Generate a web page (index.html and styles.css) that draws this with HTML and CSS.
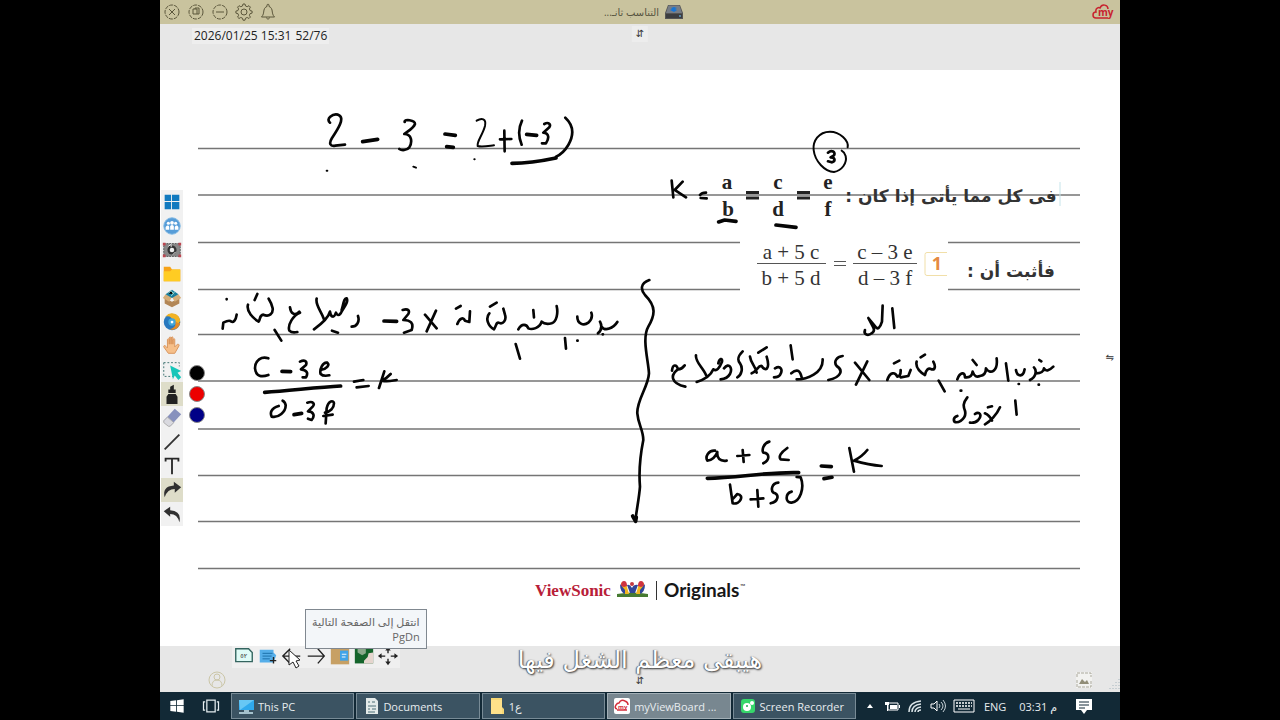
FILE: index.html
```html
<!DOCTYPE html>
<html lang="ar">
<head>
<meta charset="utf-8">
<title>myViewBoard</title>
<link rel="stylesheet" href="styles.css">
</head>
<body>
<div class="screen">
  <header class="titlebar">
    <div class="window-tools">
      <button aria-label="Close"><svg viewBox="0 0 24 24"><circle cx="12" cy="12" r="7" stroke-dasharray="4 1"/><path d="M9 9l6 6M15 9l-6 6"/></svg></button>
      <button aria-label="Restore"><svg viewBox="0 0 24 24"><circle cx="12" cy="12" r="7" stroke-dasharray="4 1"/><path d="M9 9h4v5H9zM11 9V8h4v6h-2"/></svg></button>
      <button aria-label="Minimize"><svg viewBox="0 0 24 24"><circle cx="12" cy="12" r="7" stroke-dasharray="4 1"/><path d="M8 12h8"/></svg></button>
      <button aria-label="Settings"><svg viewBox="0 0 24 24"><circle cx="12" cy="12" r="3"/><path d="M10.500 6l.5-2h2l.5 2 1.700.7 1.800-1 1.400 1.400-1 1.800.7 1.700 2 .5v2l-2 .5-.7 1.700 1 1.800-1.400 1.400-1.800-1-1.700.7-.5 2h-2l-.5-2-1.700-.7-1.800 1-1.400-1.400 1-1.800-.7-1.700-2-.5v-2l2-.5.7-1.700-1-1.800L7 5.700l1.800 1z"/></svg></button>
      <button aria-label="Notifications"><svg viewBox="0 0 24 24"><path d="M5.500 17c2-2 2-4 2.500-7 .5-2 1.500-3 3-3.500V5c0-1 2-1 2 0v1.500c1.500.5 2.500 1.500 3 3.500.5 3 .5 5 2.500 7zM10.500 17.500c0 2 3 2 3 0"/></svg></button>
    </div>
    <div class="file-name"><span dir="rtl">التناسب ثانـ...</span>
      <svg class="drive" viewBox="0 0 20 16"><path d="M4 1h12l3 8v6H1V9z" fill="#555"/><path d="M4.500 1.500h11L18 9H2z" fill="#777d86"/><path d="M7 4l3-1 3 1-2 1 2 1-3 2-4-2 2-1z" fill="#1674d4"/><path d="M2 10h16v4H2z" fill="#3c3d40"/><path d="M15 12h2" stroke="#7cf"/></svg>
    </div>
    <svg class="cloud" viewBox="0 0 22 16"><path d="M4 14C0 14 0 8 4 8c-1-4 3-5 4-4 2-5 8-3 8 1M4 14h12" fill="none" stroke="#c8222e" stroke-width="1.500"/><text x="6" y="12" class="cloud-text">my</text></svg>
  </header>
  <div class="strip strip-top">
    <span class="stamp"><time>2026/01/25 15:31</time> <span>52/76</span></span>
    <span class="updown" aria-hidden="true">⇵</span>
  </div>

  <main class="board">
    <svg class="page" viewBox="160 70 960 576">
      <g class="rules"><path d="M198 148.500H1080M198 195H1080M198 242.500H740M948 242.500H1080M198 289.500H740M948 289.500H1080M198 334.500H1080M198 381H1080M198 429H1080M198 475.500H1080M198 521.500H1080M198 568.500H1080"/></g>
      <g class="print bold">
        <text x="727" y="189">a</text><text x="728" y="216">b</text>
        <text x="778" y="189">c</text><text x="778" y="216">d</text>
        <text x="828" y="189">e</text><text x="828" y="216">f</text>
        <path d="M746 192.500h13M746 198h13M797 192.500h13M797 198h13" class="equals"/>
      </g>
      <g class="print">
        <text x="791" y="259">a + 5 c</text><text x="791" y="285">b + 5 d</text>
        <text x="885" y="259">c – 3 e</text><text x="885" y="285">d – 3 f</text>
        <path class="fraction" d="M757 263.500H826M853 263.500H917M834 261.500h12M834 265.500h12"/>
      </g>
      <path d="M947 252.500H927q-2 0-2 2v19q0 2 2 2h20" fill="none" stroke="#f1dfa8"/>
      <text class="number" x="937" y="270">1</text>
      <text class="arabic" x="951" y="202">فى كل مما يأتى إذا كان :</text>
      <text class="arabic" x="1011" y="277">فأثبت أن :</text>
      <path d="M1060 182v24" stroke="#c5e4ea"/>

      <g class="ink">
        <g transform="translate(310 100) scale(.3333)">
          <path d="M60 68C46 56 68 40 84 44C108 52 82 90 66 114C56 130 60 140 76 137L105 134M284 66C282 56 315 60 315 72C310 86 292 94 283 102C305 102 308 125 298 142C290 152 275 152 268 147M570 118L604 117M583 92L584 154M636 62C625 85 625 110 635 134M703 72C715 65 724 72 718 82L700 98C718 100 718 115 708 130L696 130M766 53C790 75 795 100 775 135C765 152 750 165 738 170"/>
          <path class="thin" d="M500 62C515 53 530 55 525 78C518 105 500 125 503 138C515 142 535 138 552 136"/>
          <path class="thick" d="M158 125L203 118M405 102L436 106M410 140L430 142M650 103L680 106M606 190C640 190 700 182 738 174"/>
          <path class="thin" d="M50 212h2M310 200l8 3M493 178h1"/>
        </g>
        <g transform="translate(650 120) scale(.3333)">
          <path class="thin" d="M593 82C597 62 570 35 540 35C505 35 488 65 491 90C495 125 525 155 552 156C575 152 592 130 587 108Q583 96 575 92"/>
          <path d="M534 98C545 88 558 96 552 106L542 112C558 113 556 125 545 127L534 124M65 182L70 232M98 185L74 210L108 232M150 225C155 218 162 218 168 218M152 234L170 235"/>
          <path class="thick" d="M206 306L224 300L258 304M378 315L438 322"/>
        </g>
        <g transform="translate(200 270) scale(.3333)">
          <path d="M80 87v1M68 176L70 158C85 150 90 150 94 155C100 158 108 150 110 134M172 72L164 90M144 104C138 125 160 145 176 155C182 145 178 136 190 134C208 142 220 130 218 115Q215 100 206 86M224 180L244 212M270 112C272 130 285 140 298 125M300 128C280 135 262 165 268 182Q276 190 292 186M350 86C345 105 365 125 372 148M342 178C360 165 385 145 390 125C393 143 402 145 408 128Q413 141 422 130C430 115 447 95 440 85C432 82 430 105 425 120M396 182L414 188M474 138C480 155 470 170 455 170M608 120C625 115 630 122 625 132L610 150C632 150 642 160 635 180L612 188"/>
          <path d="M205 265C185 258 165 270 165 295C168 320 185 322 205 315M300 275C315 268 322 275 318 285L303 298C322 300 325 310 318 322L308 322M362 300C380 298 390 285 382 278C368 275 358 300 362 312Q370 320 388 316M462 335L490 330M470 352L506 348M553 304L537 354M572 312C560 325 550 330 545 332C565 336 575 332 590 330M236 408C212 415 210 430 215 440C235 445 258 425 257 405Q255 395 248 392M322 398C340 392 345 402 338 410L324 424C342 425 345 438 335 450L324 446M377 460L380 415C385 390 402 390 402 400C402 415 390 425 375 428M370 438L398 434"/>
          <path class="thick" d="M552 153L590 154M246 304L272 305M282 434L305 430M194 367C270 362 350 352 422 348"/>
        </g>
        <g transform="translate(370 280) scale(.3333)">
          <path d="M165 104L200 145M198 92L170 154M258 86L272 78M262 132C268 115 280 110 285 122L298 126L300 94M360 80L380 68M358 100C345 115 355 140 372 148C380 135 378 128 385 128C400 135 410 120 405 104L400 86M437 192L450 236M445 148C455 130 470 132 475 145C485 150 510 145 515 125Q525 135 545 130C560 125 565 100 560 78M490 90L492 112M585 174L588 206M622 182h1M622 110C622 130 640 140 655 128Q670 115 664 98M684 160C695 150 698 140 690 125M695 140C705 155 730 145 742 126M698 163h1"/>
          <path d="M838 0C810 10 812 30 825 45C860 80 855 105 835 140C815 175 835 240 837 280C835 320 800 360 802 400C805 435 820 450 820 480C812 520 805 560 810 620C808 650 800 690 796 722"/>
          <path class="thick" d="M788 708L797 724L799 712"/>
        </g>
        <g transform="translate(650 290) scale(.3333)">
          <path d="M727 55L733 114M698 47L696 95C690 115 683 118 678 112L655 84C668 110 680 120 665 130C655 138 640 135 645 120"/>
          <path d="M66 242C68 222 80 222 84 238Q95 238 104 226M84 238C60 255 62 280 106 290M138 196C135 215 160 235 168 255M140 276C160 270 180 262 190 238C200 245 208 235 216 215C218 203 208 205 205 220M222 235C238 215 248 235 240 252Q232 266 212 268M278 184C262 200 262 210 270 220C280 235 275 255 262 262M300 200C302 220 318 230 320 248M305 250C320 245 325 225 335 228C345 245 362 240 350 200M325 188L350 172M375 235C392 225 400 240 390 255Q385 262 372 262M422 166L428 208M424 250C440 236 450 240 455 262M440 268C470 268 520 250 518 208M578 198C560 200 550 215 560 228C580 240 575 262 535 270M615 218L658 270M652 214L618 284M712 270C720 245 735 245 742 260Q753 258 752 240M752 262L775 258L782 240M732 220L748 212M800 215C795 235 815 250 825 255C828 240 835 232 845 238C855 240 858 230 850 215M812 202L825 194M866 272L884 304M922 268C930 245 945 245 945 262Q965 265 968 245Q975 265 990 258Q1008 256 1008 235C1020 255 1045 245 1040 205M968 210L980 225M932 302h2M1068 220L1075 272M1098 240C1102 262 1120 262 1124 238M1106 282h1M1140 270C1160 260 1160 240 1152 232M1158 250Q1180 250 1182 235Q1190 250 1210 230M1168 210l6 4M1166 284h1"/>
          <path d="M1096 332L1100 374M1050 352C1040 375 1020 395 1005 403M1005 370Q1018 375 1026 392M1014 352l12-3M975 372C988 362 998 375 985 390Q975 400 960 398M952 322C938 340 940 350 945 362C952 390 915 405 912 392Q910 382 922 378"/>
          <path d="M195 482C175 480 165 500 172 512C185 512 198 500 202 486C200 505 210 515 230 512M262 498L298 495M278 480L281 516M358 455C340 460 335 480 340 488C360 490 360 510 340 520M412 474C392 488 385 500 392 508L416 510M240 584L248 640C270 645 285 615 262 612L250 625M302 628L340 625M322 600L325 650M385 578C365 580 362 600 370 608C390 612 385 635 362 640M425 605C405 610 405 640 425 638C450 635 465 595 452 562L440 561M598 474L612 545M652 480C640 495 620 508 612 512C640 520 660 525 695 528"/>
          <path class="thick" d="M172 565C260 565 350 545 446 548M514 528L544 530M522 566L546 562"/>
        </g>
      </g>

      <text class="viewsonic" x="535" y="596">ViewSonic</text>
      <g><path d="M617 594q16-3 31 0v3h-31z" fill="#477b32"/><path d="M621 583q5-3 6 4l2 7h-4q-5-3-4-11M644 583q-5-3-6 4l-2 7h4q5-3 4-11" fill="#f1b521"/><path d="M621 586q0-5 3-5t3 5l-3 1zM638 586q0-5 3-5t3 5l-3 1z" fill="#ce3341"/><path d="M620 584l5 6v4q-5-2-5-10M645 584l-5 6v4q5-2 5-10M627 585q3-1 5 3 2-4 6-3l-3 8h-5z" fill="#31479a"/><circle cx="632" cy="584" r="2" fill="#c33a42"/></g>
      <path d="M656.500 581v19" stroke="#333"/>
      <text class="originals" x="664" y="597">Originals</text><text class="trademark" x="740" y="589">™</text>
    </svg>

    <div class="side">
      <div class="toolbox">
        <button aria-label="Windows"><svg viewBox="0 0 24 24"><path d="M4 4h7v7H4zM12 4h8v7h-8zM4 12h7v8H4zM12 12h8v8h-8z" fill="#117abf"/></svg></button>
        <button aria-label="Participants"><svg viewBox="0 0 24 24"><circle cx="12" cy="12" r="9" fill="#579dd8" stroke="#83bae4"/><g fill="#fff"><circle cx="8" cy="9" r="1.700"/><circle cx="12" cy="8.500" r="2"/><circle cx="16" cy="9" r="1.700"/><path d="M5 16v-3q3-3 4 0v3zM10 16v-4q2-2 4 0v4zM15 16v-3q2-3 4 0v3z"/></g></svg></button>
        <button aria-label="Screen capture"><svg viewBox="0 0 24 24"><path d="M3 5h18v14H3z" fill="#888" stroke="#555" stroke-dasharray="2 1"/><path d="M2 4h3v3H2zM19 4h3v3h-3zM2 17h3v3H2zM19 17h3v3h-3z" fill="#bc4650"/><circle cx="12" cy="12" r="5" fill="#333"/><circle cx="12" cy="12" r="2.500" fill="#eee"/><path d="M8 8l3-2v3M16 14l-3 3" stroke="#fff"/></svg></button>
        <button aria-label="Files"><svg viewBox="0 0 24 24"><path d="M3 4h7l2 3h9v13H3z" fill="#f7a318"/><path d="M3 9h7l2-2h9v13H3z" fill="#ffcc23"/></svg></button>
        <button aria-label="Resources"><svg viewBox="0 0 24 24"><path d="M4 12l8 4 8-4v6l-8 4-8-4z" fill="#b28656"/><path d="M2 12l3-4 7 3-3 5zM22 12l-3-4-7 3 3 5z" fill="#d5ad77"/><path d="M5 8l7-5 7 5-7 4z" fill="#177c9b"/><path d="M8 7l3-3 3 4M11 10l4-5" stroke="#9ce0d5"/></svg></button>
        <button aria-label="Browser"><svg viewBox="0 0 24 24"><circle cx="12" cy="12" r="9" fill="#2878be"/><path d="M5 6a9 9 0 0 1 16 5q-3 6-7 1-3-8-9-6" fill="#f3b323"/><path d="M21 12a9 9 0 0 1-12 8q9-2 6-9 5 4 6 1" fill="#e38a26"/><circle cx="12" cy="12" r="4" fill="#43a7d9"/><circle cx="12" cy="12" r="1.500" fill="#fff"/></svg></button>
        <button aria-label="Pan"><svg viewBox="0 0 24 24"><path d="M8 20l-5-7q0-3 3 0l1 1V5q1-2 2 0v5-7q1-2 2 0v7-7q2-2 2 0v7-5q2-2 2 0v8l3-3q3 0 1 3l-4 7z" fill="#f6bf89" stroke="#d69058"/></svg></button>
        <button aria-label="Select"><svg viewBox="0 0 24 24"><path d="M3 4h17v4M3 4v15h10" fill="none" stroke="#366c6a" stroke-dasharray="2 2"/><path d="M10 7l12 6-4 2 4 5-3 3-4-5-2 4z" fill="#16c6b9"/></svg></button>
        <button class="active" aria-label="Marker"><svg viewBox="0 0 24 24"><path d="M10 4l4-2v5h2v4H8V7h2zM8 12h8l2 3v8H6v-8z" fill="#222"/></svg></button>
        <button aria-label="Eraser"><svg viewBox="0 0 24 24"><path d="M3 15L15 2l7 6L10 21z" fill="#8791bd"/><path d="M3 15l4-4 7 6-4 4H8l-5-4z" fill="#d9d9df" stroke="#aaa"/></svg></button>
        <button aria-label="Line"><svg viewBox="0 0 24 24"><path d="M4 20L20 4" stroke="#333" stroke-width="2"/></svg></button>
        <button aria-label="Text"><svg viewBox="0 0 24 24"><path d="M4 3h16v4h-2V5h-5v16h-2V5H6v2H4z" fill="#282828"/></svg></button>
        <button class="active" aria-label="Redo"><svg viewBox="0 0 24 24"><path d="M4 20q-3-12 10-13V3l8 6-7 6v-4Q7 11 4 20z" fill="#303030"/></svg></button>
        <button aria-label="Undo"><svg viewBox="0 0 24 24"><path d="M20 21q3-12-10-13V4L3 9l7 6v-3q8 0 10 9z" fill="#303030"/></svg></button>
      </div>
      <div class="colors"><button class="color black" aria-label="Black"></button><button class="color red" aria-label="Red"></button><button class="color blue" aria-label="Blue"></button></div>
    </div>
    <span class="expand" aria-hidden="true">⇋</span>
  </main>

  <footer class="strip strip-bottom">
    <div class="page-tools">
      <button aria-label="Page"><svg viewBox="0 0 24 24"><path d="M3 3h14l4 4v10H3z" fill="#dffbf6" stroke="#34645f" stroke-width="1.500"/><text x="8" y="13" class="page-num">٥٢</text></svg></button>
      <button aria-label="New page"><svg viewBox="0 0 24 24"><path d="M3 4h15v3l3 3-3 8H3z" fill="#55aee9"/><path d="M6 8h11M6 11h10M6 14h8" stroke="#186ca5"/><path d="M18 12v7M14 16h7" stroke="#222" stroke-width="1.500"/></svg></button>
      <button aria-label="Next page"><svg viewBox="0 0 24 24"><path d="M21 11H3M10 3l-8 8 8 8" fill="none" stroke="#222" stroke-width="1.500"/></svg></button>
      <button aria-label="Previous page"><svg viewBox="0 0 24 24"><path d="M3 11h18M14 3l7 8-7 8" fill="none" stroke="#222" stroke-width="1.500"/></svg></button>
      <button aria-label="Background"><svg viewBox="0 0 24 24"><path d="M2 3h20v17H2z" fill="#c7a064"/><path d="M12 5h9v11h-9z" fill="#40a4e9"/><path d="M14 9h5M14 12h4" stroke="#fff"/></svg></button>
      <button aria-label="Image"><svg viewBox="0 0 24 24"><path d="M2 3h20v16H2z" fill="#14642b"/><path d="M5 3h9v5l-4 2-5-3z" fill="#8aa98b"/><path d="M12 19v-3l4-4 1-4 5-1v12z" fill="#e5d5ce"/></svg></button>
      <button aria-label="Move"><svg viewBox="0 0 24 24"><path d="M12 4v4M12 14v4M4 11h5M15 11h5" fill="none" stroke="#222" stroke-width="1.500"/><path d="M9 5l3-4 3 4zM9 17l3 4 3-4zM5 8l-4 3 4 3zM19 8l4 3-4 3z" fill="#222"/></svg></button>
    </div>
    <svg class="account" viewBox="0 0 18 18"><circle cx="9" cy="9" r="8"/><circle cx="9" cy="6" r="3"/><path d="M4 15q0-6 5-6t5 6"/></svg>
    <span class="updown updown-bottom" aria-hidden="true">⇵</span>
    <svg class="picture" viewBox="0 0 16 16"><path d="M1 5V1h14v4M1 8v7h14V8" fill="none" stroke="#aaa89c" stroke-dasharray="3 1"/><path d="M3 12l3-5 3 3 2-2 2 4z" fill="#918d78"/></svg>
    <svg class="grip" viewBox="0 0 12 12"><path d="M11 1v11M8 4v8M5 7v5M2 10v2" stroke="#a6b5bd" stroke-dasharray="1 2"/></svg>
    <div class="tooltip" dir="rtl">انتقل إلى الصفحة التالية<br><span>PgDn</span></div>
    <svg class="pointer" viewBox="0 0 14 20"><path d="M2 1v15l4-3 3 6 3-2-3-5 4-1z" fill="#fff" stroke="#222"/></svg>
  </footer>

  <nav class="taskbar">
    <button class="start" aria-label="Start"><svg viewBox="0 0 24 24"><path d="M4 6l7-1v6H4zM12 5l8-1v7h-8zM4 12h7v7l-7-1zM12 12h8v8l-8-1z" fill="#fff"/></svg></button>
    <button class="start" aria-label="Task view"><svg viewBox="0 0 24 24"><path d="M7 5h10v14H7zM5 7H3v10h2M19 7h2v10h-2" fill="none" stroke="#e5edf0" stroke-width="1.500"/></svg></button>
    <div class="tasks">
      <button><svg viewBox="0 0 18 18"><path d="M2 3h15v10H2z" fill="#30a9ed"/><path d="M2 3h15L3 13z" fill="#67c7f5"/><path d="M7 13h5v2h4v2H2v-2h5z" fill="#a5c1cc"/></svg><span>This PC</span></button>
      <button><svg viewBox="0 0 18 18"><path d="M4 1h9l3 3v13H4z" fill="#e3eae9"/><path d="M6 5h2M10 5h3M6 9h8M6 12h2M10 12h4M6 15h7" stroke="#4c6f77"/></svg><span>Documents</span></button>
      <button><svg viewBox="0 0 18 18"><path d="M3 1h11v9l2 2v5H3z" fill="#f6d775"/><path d="M3 3v14h11V3" fill="#ffe18a"/></svg><span>ع1</span></button>
      <button class="current"><svg viewBox="0 0 18 18"><rect x="1" y="1" width="16" height="16" rx="2" fill="#fff"/><path d="M4 12q-3-1-1-4 1-2 3-2 2-4 6-2 3 1 3 4M4 13h10" fill="none" stroke="#d42e3b" stroke-width="1.500"/><text x="5" y="12" class="tiny-my">my</text></svg><span>myViewBoard ...</span></button>
      <button><svg viewBox="0 0 18 18"><rect x="2" y="2" width="14" height="14" rx="3" fill="#36d66a"/><circle cx="8" cy="10" r="4" fill="#fff"/><circle cx="13" cy="6" r="2" fill="#fff"/><circle cx="8" cy="9" r="1" fill="#26a951"/></svg><span>Screen Recorder</span></button>
    </div>
    <div class="tray">
      <svg class="caret" viewBox="0 0 8 6"><path d="M1 5l3-4 3 4z" fill="#fff"/></svg>
      <svg viewBox="0 0 16 14"><path d="M4 4h10v7H4z" fill="none" stroke="#fff"/><path d="M6 6h7v4H6zM15 6h1v3h-1zM1 3h4v3H4v6H3V6H1z" fill="#fff"/></svg>
      <svg viewBox="0 0 16 14"><path d="M2 13Q2 3 14 2M5 13q0-7 9-8M8 13q0-4 6-5M11 13q0-2 3-2" fill="none" stroke="#d9e3e7" stroke-width="1.500"/></svg>
      <svg viewBox="0 0 16 14"><path d="M1 5h3l3-3v10L4 9H1z" fill="none" stroke="#fff"/><path d="M9 5q2 2 0 4M11 3q4 4 0 8M13 1q5 6 0 12" fill="none" stroke="#c5d0d5"/></svg>
      <svg class="keyboard" viewBox="0 0 22 14"><path d="M1 1h20v12H1z" fill="none" stroke="#fff"/><path d="M3 4h16M3 7h16" stroke="#fff" stroke-width="1.500" stroke-dasharray="2 1"/><path d="M5 10h12" stroke="#fff"/></svg>
      <span class="lang">ENG</span>
      <time dir="ltr">03:31 م</time>
      <svg class="message" viewBox="0 0 16 16"><path d="M0 1h16v11h-5l-3 4-3-4H0z" fill="#fff"/><path d="M3 4h10M3 7h10M3 10h6" stroke="#122936"/></svg>
    </div>
  </nav>
  <p class="subtitle" dir="rtl">هيبقى معظم الشغل فيها</p>
</div>
</body>
</html>
```
FILE: styles.css
```css
* { box-sizing: border-box; }
body { margin: 0; background: #000; font-family: "Open Sans", "DejaVu Sans", sans-serif; }
button { margin: 0; padding: 0; border: 0; background: none; color: inherit; font: inherit; }
svg { display: block; }
.screen { position: relative; display: flex; flex-direction: column; width: 75%; min-height: 100vh; margin: 0 auto; background: #fff; }
.titlebar { display: grid; grid-template-columns: 1fr auto 1fr; align-items: center; height: 24px; background: #c9c39e; color: #57543f; }
.window-tools { display: flex; }
.window-tools svg { width: 24px; height: 24px; fill: none; stroke: #5b563b; }
.file-name { display: flex; align-items: center; gap: 5px; padding-left: 8px; font-size: 10px; line-height: 16px; }
.drive { width: 20px; height: 16px; }
.cloud { justify-self: end; width: 22px; height: 16px; margin-right: 6px; }
.cloud-text { font: bold 10px "Open Sans", sans-serif; fill: #c8222e; }
.strip { position: relative; height: 46px; background: #e7e7e7; }
.strip-top { display: flex; align-items: flex-start; padding: 4px 0 0 32px; }
.stamp { display: flex; gap: 4px; padding: 0 2px; background: #eee; color: #222; font-size: 12px; line-height: 16px; }
.updown { position: absolute; left: 50%; top: 2px; padding: 0 4px; transform: translateX(-50%); background: #ededed; color: #333; font: 10px/16px "DejaVu Sans", sans-serif; }
.updown-bottom { top: 27px; background: none; }
.board { position: relative; flex: 1; background: #fff; }
.page { width: 100%; height: auto; }
.rules path { stroke: #757575; stroke-width: 1.5; }
.print { font: 21px "Liberation Serif", serif; fill: #333; text-anchor: middle; }
.bold { font-weight: bold; fill: #222; }
.equals { stroke: #222; stroke-width: 3; }
.fraction { stroke: #555; }
.number { font: bold 18px "Open Sans", sans-serif; fill: #e58a42; text-anchor: middle; }
.arabic { font: bold 17px "DejaVu Sans", sans-serif; fill: #333; text-anchor: middle; direction: rtl; }
.ink path { fill: none; stroke: #050505; stroke-width: 8; stroke-linecap: round; stroke-linejoin: round; }
.ink .thin { stroke-width: 6; }
.ink .thick { stroke-width: 11; }
.viewsonic { font: bold 17px "Liberation Serif", serif; fill: #b82038; }
.originals { font: bold 19px Lato, sans-serif; fill: #171717; }
.trademark { font: 7px Lato, sans-serif; fill: #222; }
.side { position: absolute; left: 1px; top: 120px; display: flex; gap: 6px; }
.toolbox { display: flex; flex-direction: column; background: #f1f1f1; }
.toolbox button { width: 22px; height: 24px; }
.toolbox svg { width: 22px; height: 22px; }
.toolbox .active { background: #deddc9; }
.colors { display: flex; flex-direction: column; gap: 5px; padding-top: 175px; }
.color { width: 16px; height: 16px; border: 1px solid #888; border-radius: 50%; }
.black { background: #000; }
.red { background: #ec0000; }
.blue { background: #000087; }
.expand { position: absolute; top: 50%; right: 6px; transform: translateY(-50%); color: #333; font: 10px/16px "DejaVu Sans", sans-serif; }
.page-tools { display: flex; width: max-content; margin-left: 72px; background: #efefef; }
.page-tools button { width: 24px; height: 22px; }
.page-tools svg { width: 24px; height: 22px; }
.page-num { font: 7px "DejaVu Sans", sans-serif; fill: #333; }
.account { position: absolute; left: 48px; top: 25px; width: 18px; height: 18px; fill: none; stroke: #cbc6a7; }
.picture { position: absolute; right: 28px; top: 26px; width: 16px; height: 16px; background: #f2f2f0; }
.grip { position: absolute; right: 0; bottom: 2px; width: 12px; height: 12px; }
.tooltip { position: absolute; left: 145px; bottom: 43px; padding: 4px 6px; border: 1px solid #808890; background: #f3f6f9; color: #666; font-size: 11px; line-height: 15px; white-space: nowrap; }
.pointer { position: absolute; left: 127px; top: 3px; width: 14px; height: 20px; }
.taskbar { display: flex; align-items: center; height: 28px; padding-right: 28px; background: #122936; color: #e7ecef; font-size: 11px; }
.start { width: 34px; flex: none; }
.start svg { width: 20px; height: 20px; margin: auto; }
.tasks { display: grid; grid-template-columns: repeat(5, 1fr); flex: 1; gap: 2px; margin-left: 3px; }
.tasks button { display: flex; align-items: center; gap: 3px; height: 26px; min-width: 0; padding: 0 5px; border: 1px solid #788b96; background: #3b5362; white-space: nowrap; }
.tasks svg { width: 18px; height: 18px; flex: none; }
.tasks .current { background: #788790; border-color: #a2afb6; }
.tiny-my { font: bold 6px "Open Sans", sans-serif; fill: #d42e3b; }
.tray { display: flex; align-items: center; gap: 7px; padding-left: 10px; }
.tray svg { width: 16px; height: 14px; }
.tray .caret { width: 8px; height: 6px; margin-right: 3px; }
.tray .keyboard { width: 22px; }
.tray .lang { padding: 0 6px 0 2px; }
.tray time { padding-right: 12px; white-space: nowrap; }
.tray .message { height: 16px; }
.subtitle { position: absolute; left: 50%; bottom: 42px; margin: 0; transform: translateX(-50%); color: #fff; font: 24px/36px "DejaVu Sans", sans-serif; text-shadow: 1px 1px 2px #333, -1px 0 1px #666; white-space: nowrap; }
```
